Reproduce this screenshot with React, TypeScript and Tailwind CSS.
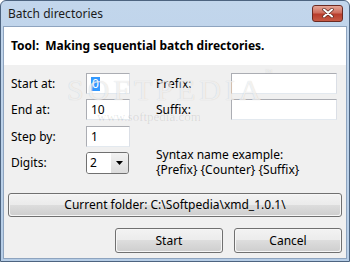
import React from 'react';

const font = 'font-["Noto_Sans","Open_Sans",sans-serif]';

const TextBox = ({ value, selected, w }: { value?: string; selected?: boolean; w: string }) => (
  <div
    className={`${w} h-[21px] bg-white border border-[#abadb3] border-r-[#dbdfe6] border-b-[#e3e9ef] flex items-center pl-[4px] text-[12px] text-black`}
  >
    {selected ? <span className="bg-[#3399ff] text-white px-[1px] leading-[14px]">{value}</span> : value}
  </div>
);

const WinButton = ({ label, className }: { label: string; className: string }) => (
  <div
    className={`${className} rounded-[3px] border border-[#707070] p-[1px] bg-[#f6f6f6]`}
  >
    <div className="h-full w-full rounded-[2px] bg-[linear-gradient(#f2f2f2_0%,#ebebeb_50%,#dddddd_50%,#cfcfcf_100%)] flex items-center justify-center text-[12px] text-black">
      {label}
    </div>
  </div>
);

export default function App() {
  return (
    <div className={`${font} w-[350px] h-[262px] flex flex-col bg-[linear-gradient(#c2d6ec,#b6cde6)] border border-[#4d6480] rounded-t-[6px] px-[2px] pb-[2px] relative overflow-hidden`}>
      {/* title bar */}
      <div className="h-[25px] flex items-center justify-between pl-[5px] pr-[4px]">
        <span className="text-[12px] text-[#1b1b1b] pt-[1px]">Batch directories</span>
        <div className="w-[31px] h-[17px] -mt-[1px] rounded-[3px] border border-[#6b2a22] bg-[linear-gradient(#e5a697,#cf6e5e_45%,#b83d2c_55%,#c75a45)] flex items-center justify-center">
          <svg width="12" height="10" viewBox="0 0 12 10">
            <path d="M2 1.5 L10 8.5 M10 1.5 L2 8.5" stroke="#5a2a22" strokeWidth="3.4" strokeLinecap="round" />
            <path d="M2 1.5 L10 8.5 M10 1.5 L2 8.5" stroke="#ffffff" strokeWidth="2" strokeLinecap="round" />
          </svg>
        </div>
      </div>

      {/* client area */}
      <div className="flex-1 border border-[#8ea4bf] bg-[#f0f0f0] flex flex-col">
        <div className="h-[38px] bg-white flex items-center pl-[7px]">
          <span className="text-[12px] font-bold text-black">Tool:&nbsp; Making sequential batch directories.</span>
        </div>

        <div className="flex pt-[8px] pl-[7px]">
          {/* left column */}
          <div className="flex flex-col gap-[5px] w-[145px]">
            <div className="flex items-center h-[21px]">
              <span className="w-[75px] text-[12px] text-black">Start at:</span>
              <TextBox w="w-[44px]" value="0" selected />
            </div>
            <div className="flex items-center h-[21px]">
              <span className="w-[75px] text-[12px] text-black">End at:</span>
              <TextBox w="w-[44px]" value="10" />
            </div>
            <div className="flex items-center h-[21px] mt-[1px]">
              <span className="w-[75px] text-[12px] text-black">Step by:</span>
              <TextBox w="w-[44px]" value="1" />
            </div>
            <div className="flex items-center h-[22px]">
              <span className="w-[75px] text-[12px] text-black">Digits:</span>
              <div className="w-[43px] h-[22px] rounded-[3px] border border-[#707070] flex overflow-hidden">
                <div className="flex-1 bg-white flex items-center pl-[3px] text-[12px] text-black">2</div>
                <div className="w-[17px] bg-[linear-gradient(#f2f2f2,#dcdcdc)] flex items-center justify-center">
                  <svg width="7" height="4" viewBox="0 0 7 4">
                    <path d="M0 0 H7 L3.5 4 Z" fill="#000" />
                  </svg>
                </div>
              </div>
            </div>
          </div>

          {/* right column */}
          <div className="flex flex-col gap-[5px]">
            <div className="flex items-center h-[21px]">
              <span className="w-[75px] text-[12px] text-black">Prefix:</span>
              <TextBox w="w-[106px]" />
            </div>
            <div className="flex items-center h-[21px]">
              <span className="w-[75px] text-[12px] text-black">Suffix:</span>
              <TextBox w="w-[106px]" />
            </div>
            <div className="mt-[22px] text-[12px] leading-[15px] text-black">
              <div>Syntax name example:</div>
              <div>{'{Prefix} {Counter} {Suffix}'}</div>
            </div>
          </div>
        </div>

        <div className="px-[4px] mt-[16px]">
          <WinButton label={'Current folder: C:\\Softpedia\\xmd_1.0.1\\'} className="w-full h-[24px]" />
        </div>

        <div className="flex justify-end gap-[11px] pr-[4px] mt-[11px]">
          <WinButton label="Start" className="w-[108px] h-[25px]" />
          <WinButton label="Cancel" className="w-[108px] h-[25px]" />
        </div>
      </div>

      {/* softpedia watermark */}
      <div className="absolute left-[66px] top-[66px] pointer-events-none select-none">
        <div className='font-["Liberation_Serif",serif] text-[30px] tracking-[4px] text-white/70 [text-shadow:0_0_1px_rgba(0,0,0,0.18)]'>
          SOFTPEDIA<span className="text-[8px] align-top">™</span>
        </div>
        <div className='font-["Liberation_Serif",serif] text-[13px] -mt-[5px] ml-[30px] text-black/10'>www.softpedia.com</div>
      </div>
    </div>
  );
}
